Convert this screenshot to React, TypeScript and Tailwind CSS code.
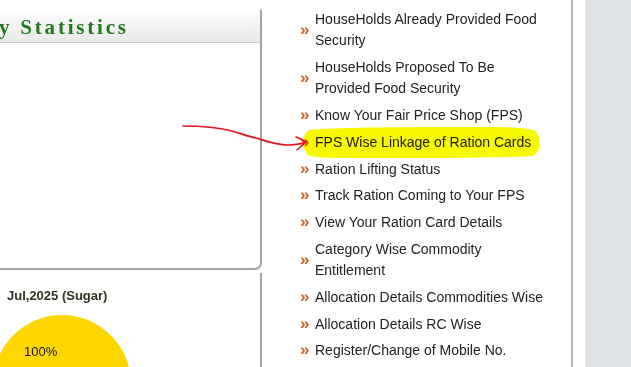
import React from 'react';

const links: string[] = [
    'HouseHolds Already Provided Food Security',
    'HouseHolds Proposed To Be Provided Food Security',
    'Know Your Fair Price Shop (FPS)',
    'FPS Wise Linkage of Ration Cards',
    'Ration Lifting Status',
    'Track Ration Coming to Your FPS',
    'View Your Ration Card Details',
    'Category Wise Commodity Entitlement',
    'Allocation Details Commodities Wise',
    'Allocation Details RC Wise',
    'Register/Change of Mobile No.',
];

const Annotations: React.FC = () => (
    <svg
        className="absolute left-0 top-0 pointer-events-none"
        width="631"
        height="367"
        viewBox="0 0 631 367"
    >
        <path
            d="M309 130 C 340 127, 420 127, 470 127 C 505 127, 530 127, 536 132 C 542 139, 541 151, 533 156 C 500 158, 420 158, 360 158 C 335 158, 315 158, 308 155 C 302 149, 301 136, 309 130 Z"
            fill="#f8f800"
            className="mix-blend-multiply"
        />
        <path
            d="M183 126 C 200 126, 220 128, 232 131 C 240 133, 246 136, 256 138 C 266 141, 275 145, 288 145 C 294 145, 299 144, 304 143"
            fill="none"
            stroke="#e3141b"
            strokeWidth="1.6"
            strokeLinecap="round"
        />
        <path
            d="M296 137 C 300 139, 303 140, 306 142 C 303 145, 300 147, 297 150"
            fill="none"
            stroke="#e3141b"
            strokeWidth="1.6"
            strokeLinecap="round"
        />
    </svg>
);

const App: React.FC = () => {
    return (
        <div className="relative w-[631px] h-[367px] overflow-hidden bg-white flex font-['Liberation_Sans',Arial,sans-serif]">
            {/* left column */}
            <div className="w-[262px] shrink-0 flex flex-col pt-[9px]">
                <div className="h-[261px] shrink-0 bg-white border-r-2 border-b-2 border-[#a3a3a3] rounded-br-[7px] rounded-tr-[3px] flex flex-col">
                    <div className="h-[34px] bg-gradient-to-b from-white to-[#e8e8e8] border-b border-[#cfcfcf] flex items-center">
                        <span className="font-['Liberation_Serif','Times_New_Roman',serif] font-bold text-[21px] tracking-[2.8px] text-[#217a1c] leading-none ml-[-1px] mt-[3px] whitespace-nowrap">
                            y Statistics
                        </span>
                    </div>
                </div>
                <div className="flex-1 mt-[3px] bg-white border-r-2 border-[#a3a3a3] pl-[7px] pt-[15px]">
                    <div className="text-[13px] font-bold leading-[16px] text-[#2b3520]">Jul,2025 (Sugar)</div>
                    <div className="mt-[11px] ml-[-14px] w-[138px] h-[138px] rounded-full bg-[#ffd700] pl-[31px] pt-[24px]">
                        <span className="text-[13px] leading-[16px] text-[#111]">100%</span>
                    </div>
                </div>
            </div>

            {/* link list */}
            <div className="w-[311px] shrink-0 bg-white border-r-2 border-[#b3b3b3] pl-[38px] pt-[9px]">
                <ul className="flex flex-col gap-[5.5px]">
                    {links.map((label) => (
                        <li key={label} className="flex items-center">
                            <span className="w-[15px] shrink-0 text-[#c4672c] font-bold text-[17px] leading-none mt-[-2px]">»</span>
                            <span className="w-[235px] text-[14px] leading-[21.25px] text-[#222]">{label}</span>
                        </li>
                    ))}
                </ul>
            </div>

            <div className="w-[12px] shrink-0 bg-white" />
            <div className="flex-1 bg-[#dee1e5]" />

            <Annotations />
        </div>
    );
};

export default App;
